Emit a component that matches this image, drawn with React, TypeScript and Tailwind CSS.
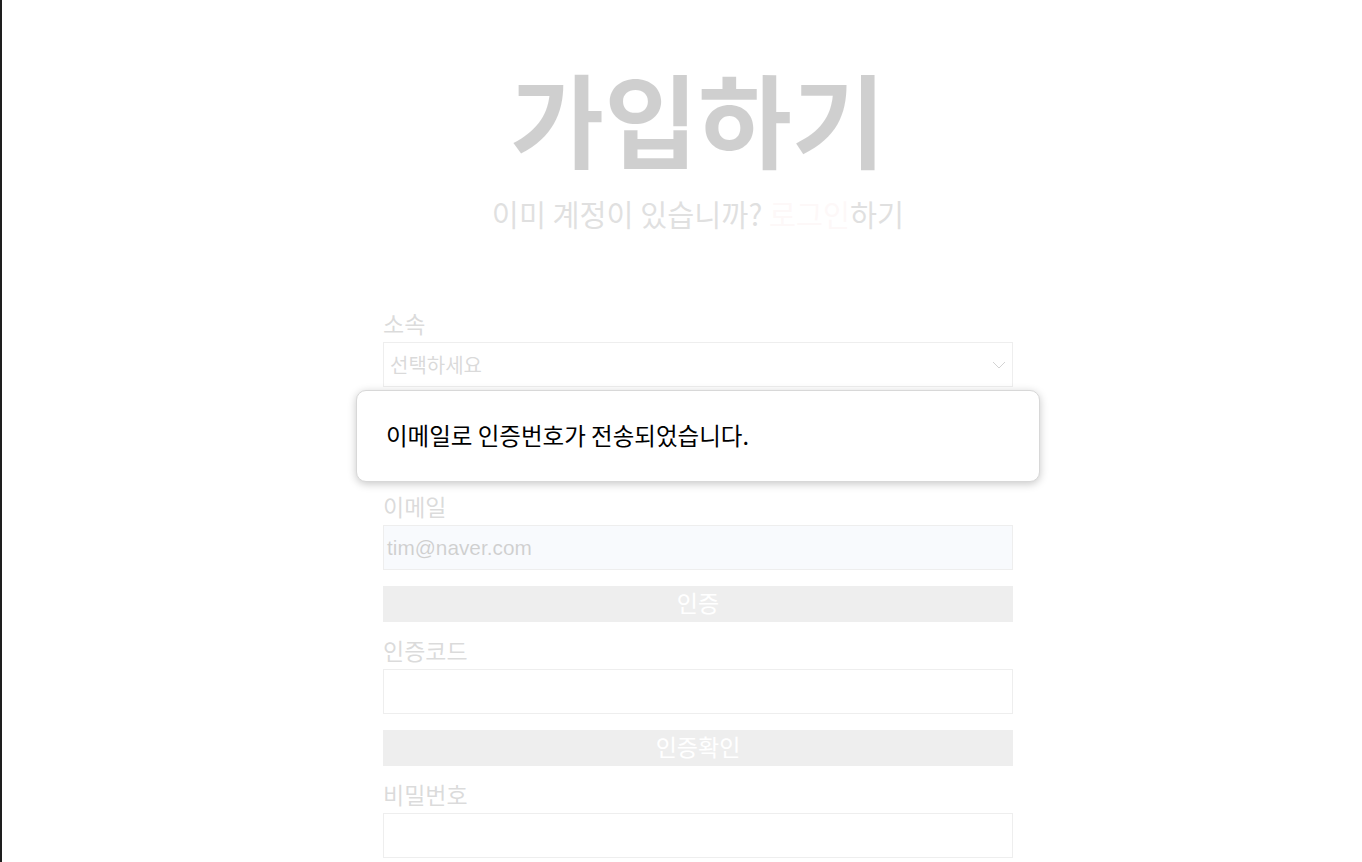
import React from "react";

const font = { fontFamily: '"Noto Sans CJK KR", "Noto Sans", sans-serif' };

function Label({ children }: { children?: React.ReactNode }) {
  return (
    <div className="h-[28px] text-[23px] leading-[28px] text-[#4a4a4a]">{children}</div>
  );
}

function Field({
  label,
  className = "",
  children,
}: {
  label?: string;
  className?: string;
  children: React.ReactNode;
}) {
  return (
    <div className={`flex flex-col gap-[5px] ${className}`}>
      <Label>{label}</Label>
      {children}
    </div>
  );
}

function TextInput({
  value,
  filled,
  className = "h-[45px]",
}: {
  value?: string;
  filled?: boolean;
  className?: string;
}) {
  return (
    <div
      className={`${className} border border-[#aaaaaa] flex items-center pl-[3px] ${
        filled ? "bg-[#dce6f5]" : "bg-white"
      }`}
    >
      {value && (
        <span
          className="text-[20.8px] text-[#111111]"
          style={{ fontFamily: '"Liberation Sans", Arial, sans-serif' }}
        >
          {value}
        </span>
      )}
    </div>
  );
}

function Button({ children }: { children: React.ReactNode }) {
  return (
    <div className="mt-4 h-[36px] pb-[4px] bg-[#aaaaaa] text-white text-[23px] leading-none flex items-center justify-center">
      {children}
    </div>
  );
}

export default function App() {
  return (
    <div className="relative h-screen w-full overflow-hidden bg-white" style={font}>
      <div className="flex flex-col items-center pl-[34px]">
        <h1 className="mt-[66px] text-[102px] font-bold leading-none text-[#111111]">
          가입하기
        </h1>
        <p className="mt-[27px] text-[29.4px] leading-[36px] text-[#646464]">
          이미 계정이 있습니까? <span className="text-[#f7dada]">로그인</span>하기
        </p>

        <div className="mt-[78px] w-[630px] flex flex-col">
          <Field label="소속">
            <div className="h-[45px] border border-[#aaaaaa] bg-white flex items-center justify-between pl-[6px] pr-[6px]">
              <span className="text-[20px] text-[#444444]">선택하세요</span>
              <svg width="14" height="8" viewBox="0 0 14 8" fill="none">
                <path d="M1 1l6 6 6-6" stroke="#222" strokeWidth="1" />
              </svg>
            </div>
          </Field>
          <Field className="mt-4">
            <TextInput className="h-[40px]" />
          </Field>
          <Field label="이메일" className="mt-4">
            <TextInput value="tim@naver.com" filled />
          </Field>
          <Button>인증</Button>
          <Field label="인증코드" className="mt-[14px]">
            <TextInput />
          </Field>
          <Button>인증확인</Button>
          <Field label="비밀번호" className="mt-[14px]">
            <TextInput />
          </Field>
        </div>
      </div>

      <div className="absolute inset-0 bg-white/80" />

      <div className="absolute left-[356px] top-[390px] w-[684px] h-[92px] bg-white rounded-[10px] border border-[#d8d8d8] shadow-[0_2px_8px_rgba(0,0,0,0.22)] flex items-center pl-[29px]">
        <span className="text-[23.5px] text-black">이메일로 인증번호가 전송되었습니다.</span>
      </div>

      <div className="absolute left-0 top-0 bottom-0 w-[2px] bg-[#1e1e1e]" />
    </div>
  );
}
